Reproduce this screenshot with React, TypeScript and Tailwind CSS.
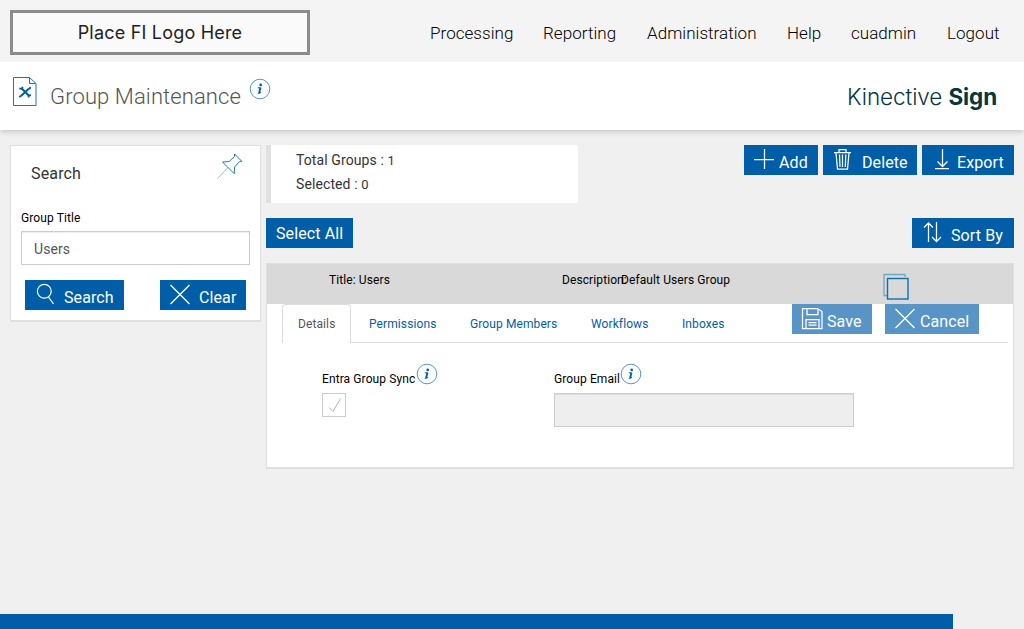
import clsx from "clsx";
import { ReactNode } from "react";

const navItems = [
    { label: "Processing", className: "w-[83px]" },
    { label: "Reporting", className: "w-[74px]" },
    { label: "Administration", className: "w-[110px]" },
    { label: "Help", className: "w-[34px]" },
    { label: "cuadmin", className: "w-[66px]" },
    { label: "Logout", className: "w-[53px]" },
];

const tabs = [
    { label: "Permissions", className: "ml-[18px] w-[101px]" },
    { label: "Group Members", className: "w-[121px]" },
    { label: "Workflows", className: "w-[91px]" },
    { label: "Inboxes", className: "w-[50px]" },
];

type ActionButtonProps = {
    label: string;
    className?: string;
    iconWidth?: number;
    disabled?: boolean;
    children?: ReactNode;
};

function ActionButton({ label, className, iconWidth = 39, disabled, children }: ActionButtonProps) {
    return (
        <button
            disabled={disabled}
            className={clsx("flex h-[30px] shrink-0 whitespace-nowrap bg-[#005da8] text-base leading-[30px] tracking-[0.1px] text-white", disabled && "opacity-65", className)}
        >
            {children && (
                <svg width={iconWidth} height="30" viewBox={`0 0 ${iconWidth} 30`} fill="none" stroke="currentColor" strokeWidth="1.25" className="shrink-0">
                    {children}
                </svg>
            )}
            <span className={children ? "pt-[3px]" : "pl-[10px] pt-px"}>{label}</span>
        </button>
    );
}

function InfoIcon({ className }: { className?: string }) {
    return (
        <svg width="22" height="22" viewBox="0 0 22 22" fill="none" className={clsx("shrink-0", className)}>
            <circle cx="11" cy="11" r="9.8" stroke="#2f7db8" strokeWidth="0.8" />
            <circle cx="11.7" cy="6.9" r="1.3" fill="#005da8" />
            <path d="M8.8 9.8h2.6M8.800 15.300q1.8.4 3.300-1" stroke="#005da8" strokeWidth="1" />
            <path d="M11.500 9.500l-1.400 5.600" stroke="#005da8" strokeWidth="1.9" />
        </svg>
    );
}

function CrossIcon() {
    return <path d="M10.5 5l19 19M29.5 5l-19 19" />;
}

function Header() {
    return (
        <header className="relative z-10 flex h-[62px] justify-between bg-[#f4f4f4] pl-[10px] pr-[24px]">
            <div className="mt-[10px] flex h-[45px] w-[300px] items-center justify-center border-[3px] border-[#8c8c8c] bg-[#fafafa] font-['Inter'] text-[18px] tracking-[0.2px] text-[#222]">
                <span className="whitespace-nowrap">Place FI Logo Here</span>
            </div>
            <nav className="flex gap-[30px] pt-[21px] text-[17px] font-light leading-6 tracking-[0.05px] text-black">
                {navItems.map((item) => (
                    <a key={item.label} className={clsx("whitespace-nowrap", item.className)}>{item.label}</a>
                ))}
            </nav>
        </header>
    );
}

function TitleBar() {
    return (
        <div className="relative flex h-[68px] bg-white pl-[12px] pr-[25px] shadow-[0_1px_6px_rgba(0,0,0,0.22)]">
            <svg width="26" height="32" viewBox="0 0 26 32" fill="none" className="mt-[14px] shrink-0" stroke="#1876b8">
                <path d="M1.5 1.5h16l6.500 6v22H1.5z" />
                <path d="M17.5 1.5v6H24" />
                <path d="M10 12.800l7 7M9.500 19.500l7-6.500" stroke="#005da8" strokeWidth="2" />
                <path d="M7.300 12.300l2.700.7.600-2.200M18.800 11.300l-2.300 2M7.200 21l2.800-1.800M16.300 21.300l.7-1.800 2-.3" stroke="#005da8" strokeWidth="1.8" />
            </svg>
            <h1 className="ml-[12px] mt-[19px] w-[190px] shrink-0 whitespace-nowrap text-[22px] font-light leading-8 tracking-[0.1px] text-[#555]">Group Maintenance</h1>
            <InfoIcon className="ml-[9px] mt-[16px]" />
            <div className="ml-auto mt-[19px] w-[152px] whitespace-nowrap font-['Inter'] text-[22.5px] font-light leading-8 tracking-[-0.1px] text-[#06373f]">
                Kinective <b className="font-bold">Sign</b>
            </div>
        </div>
    );
}

function SearchPanel() {
    return (
        <aside className="h-[177px] w-[251px] shrink-0 border border-b-2 border-[#e0e0e0] bg-white">
            <div className="flex h-[60px] justify-between pl-[20px] pr-[16px]">
                <h2 className="pt-[16px] text-base leading-6 tracking-[0.15px] text-[#333]">Search</h2>
                <svg width="28" height="28" viewBox="0 0 28 28" fill="none" className="mt-[6px]">
                    <path d="M18.500 2l7.300 7.300-2.200.2-5 5.500-.4 6.700L6.500 10l6.700-.5 5.300-5z" stroke="#2178b6" />
                    <path d="M12 15.500L1.500 26.500" stroke="#9dbfd7" />
                </svg>
            </div>
            <label className="block pl-[10px] text-xs leading-6 tracking-[0.1px] text-black">Group Title</label>
            <input
                readOnly
                value="Users"
                className="ml-[10px] mt-[1px] block h-[34px] w-[229px] border border-[#ccc] bg-white px-3 pt-[2px] text-sm tracking-[0.1px] text-[#555] shadow-[inset_0_1px_1px_rgba(0,0,0,0.075)]"
            />
            <div className="ml-[14px] mt-[15px] flex gap-[36px]">
                <ActionButton label="Search" className="w-[99px]">
                    <circle cx="19.3" cy="11.3" r="6.9" />
                    <path d="M23.5 17l5 7" />
                </ActionButton>
                <ActionButton label="Clear" className="w-[86px]">
                    <CrossIcon />
                </ActionButton>
            </div>
        </aside>
    );
}

function Toolbar() {
    return (
        <>
            <div className="flex h-[58px] justify-between">
                <div className="w-[312px] border-l-[5px] border-[#e0e0e0] bg-white pl-[25px] pt-[3px] text-sm leading-6 tracking-[0.1px] text-[#333]">
                    <div className="h-6">Total Groups : <span className="text-[13px]">1</span></div>
                    <div className="h-6">Selected : <span className="text-[13px]">0</span></div>
                </div>
                <div className="flex gap-[5px]">
                    <ActionButton label="Add" className="w-[74px]" iconWidth={35}>
                        <path d="M10 14.5h20M20.5 4v20" />
                    </ActionButton>
                    <ActionButton label="Delete" className="w-[94px]">
                        <path d="M11 7.5h17M16 7V4.5h7V7M13 8l1.5 16h10L26 8M16.5 9.5l.5 12.5M19.5 9.5V22M22.8 9.5l-.5 12.5" />
                    </ActionButton>
                    <ActionButton label="Export" className="w-[92px]" iconWidth={35}>
                        <path d="M20.5 4v17M15.5 16.5l5 5 5-5M13 23.7h14" />
                    </ActionButton>
                </div>
            </div>
            <div className="mt-[15px] flex justify-between">
                <ActionButton label="Select All" className="w-[87px]" />
                <ActionButton label="Sort By" className="w-[102px]">
                    <path d="M16.5 24V5M12 9.5L16.5 5 21 9.5M24.5 4v19.5M20 19l4.5 4.5L29 19" />
                </ActionButton>
            </div>
        </>
    );
}

function GroupCard() {
    return (
        <section className="mt-[15px] h-[206px] border border-b-2 border-[#e0e0e0] bg-white text-xs tracking-[0.1px] text-black">
            <div className="flex h-[40px] bg-[#d9d9d9] pl-[62px] leading-4">
                <div className="w-[233px] pt-[8px]">Title: Users</div>
                <div className="w-[59px] whitespace-nowrap pt-[8px]">Description:</div>
                <div className="w-[261px] pt-[8px]">Default Users Group</div>
                <svg width="28" height="28" viewBox="0 0 28 28" fill="none" className="mt-[9px]">
                    <path d="M5 22.500H2v-21h21V4" stroke="#77a7bd" strokeWidth="1.3" />
                    <rect x="5.500" y="5.500" width="20.500" height="20.500" stroke="#0873b3" strokeWidth="1.4" />
                </svg>
            </div>
            <div className="ml-[15px] mr-[5px] flex h-[39px] border-b border-[#ddd] text-[#005da8]">
                <div className="h-[39px] w-[69px] shrink-0 rounded-t border border-b-0 border-[#ddd] bg-white pl-[15px] leading-[38px] text-[#555]">
                    Details
                </div>
                {tabs.map((tab) => (
                    <a key={tab.label} className={clsx("shrink-0 whitespace-nowrap pt-px leading-[38px]", tab.className)}>{tab.label}</a>
                ))}
                <div className="ml-[60px] flex gap-[13px]">
                    <ActionButton label="Save" className="w-[80px]" iconWidth={35} disabled>
                        <path d="M10.5 4.5h15l4.5 3v17H10.5zM15 5v5.5h11V5M14 24v-8.5h13V24M16.5 18.5h8M16.5 21h8" />
                    </ActionButton>
                    <ActionButton label="Cancel" className="w-[94px]" iconWidth={35} disabled>
                        <CrossIcon />
                    </ActionButton>
                </div>
            </div>
            <div className="flex pl-[55px] pt-[20px]">
                <div className="w-[232px]">
                    <div className="flex h-[30px] leading-4">
                        <span className="w-[94px] whitespace-nowrap pt-[8px]">Entra Group Sync</span>
                        <InfoIcon />
                    </div>
                    <div className="h-[24px] w-[24px] border border-[#ccc]">
                        <svg width="22" height="22" viewBox="0 0 22 22" fill="none" stroke="#8bb9db">
                            <path d="M6 13.5l4 4L17.5 4.500" />
                        </svg>
                    </div>
                </div>
                <div>
                    <div className="flex h-[30px] leading-4">
                        <span className="w-[66px] whitespace-nowrap pt-[8px]">Group Email</span>
                        <InfoIcon />
                    </div>
                    <input disabled className="block h-[34px] w-[300px] border border-[#ccc] bg-[#eee] shadow-[inset_0_1px_1px_rgba(0,0,0,0.075)]" />
                </div>
            </div>
        </section>
    );
}

export default function App() {
    return (
        <div className="flex h-[629px] w-[1024px] flex-col overflow-hidden bg-[#f0f0f0] font-[Roboto,sans-serif]">
            <Header />
            <TitleBar />
            <main className="flex flex-grow gap-[5px] px-[10px] pt-[15px]">
                <SearchPanel />
                <div className="w-[748px]">
                    <Toolbar />
                    <GroupCard />
                </div>
            </main>
            <footer className="h-[15px] w-[953px] bg-[#005da8]" />
        </div>
    );
}
